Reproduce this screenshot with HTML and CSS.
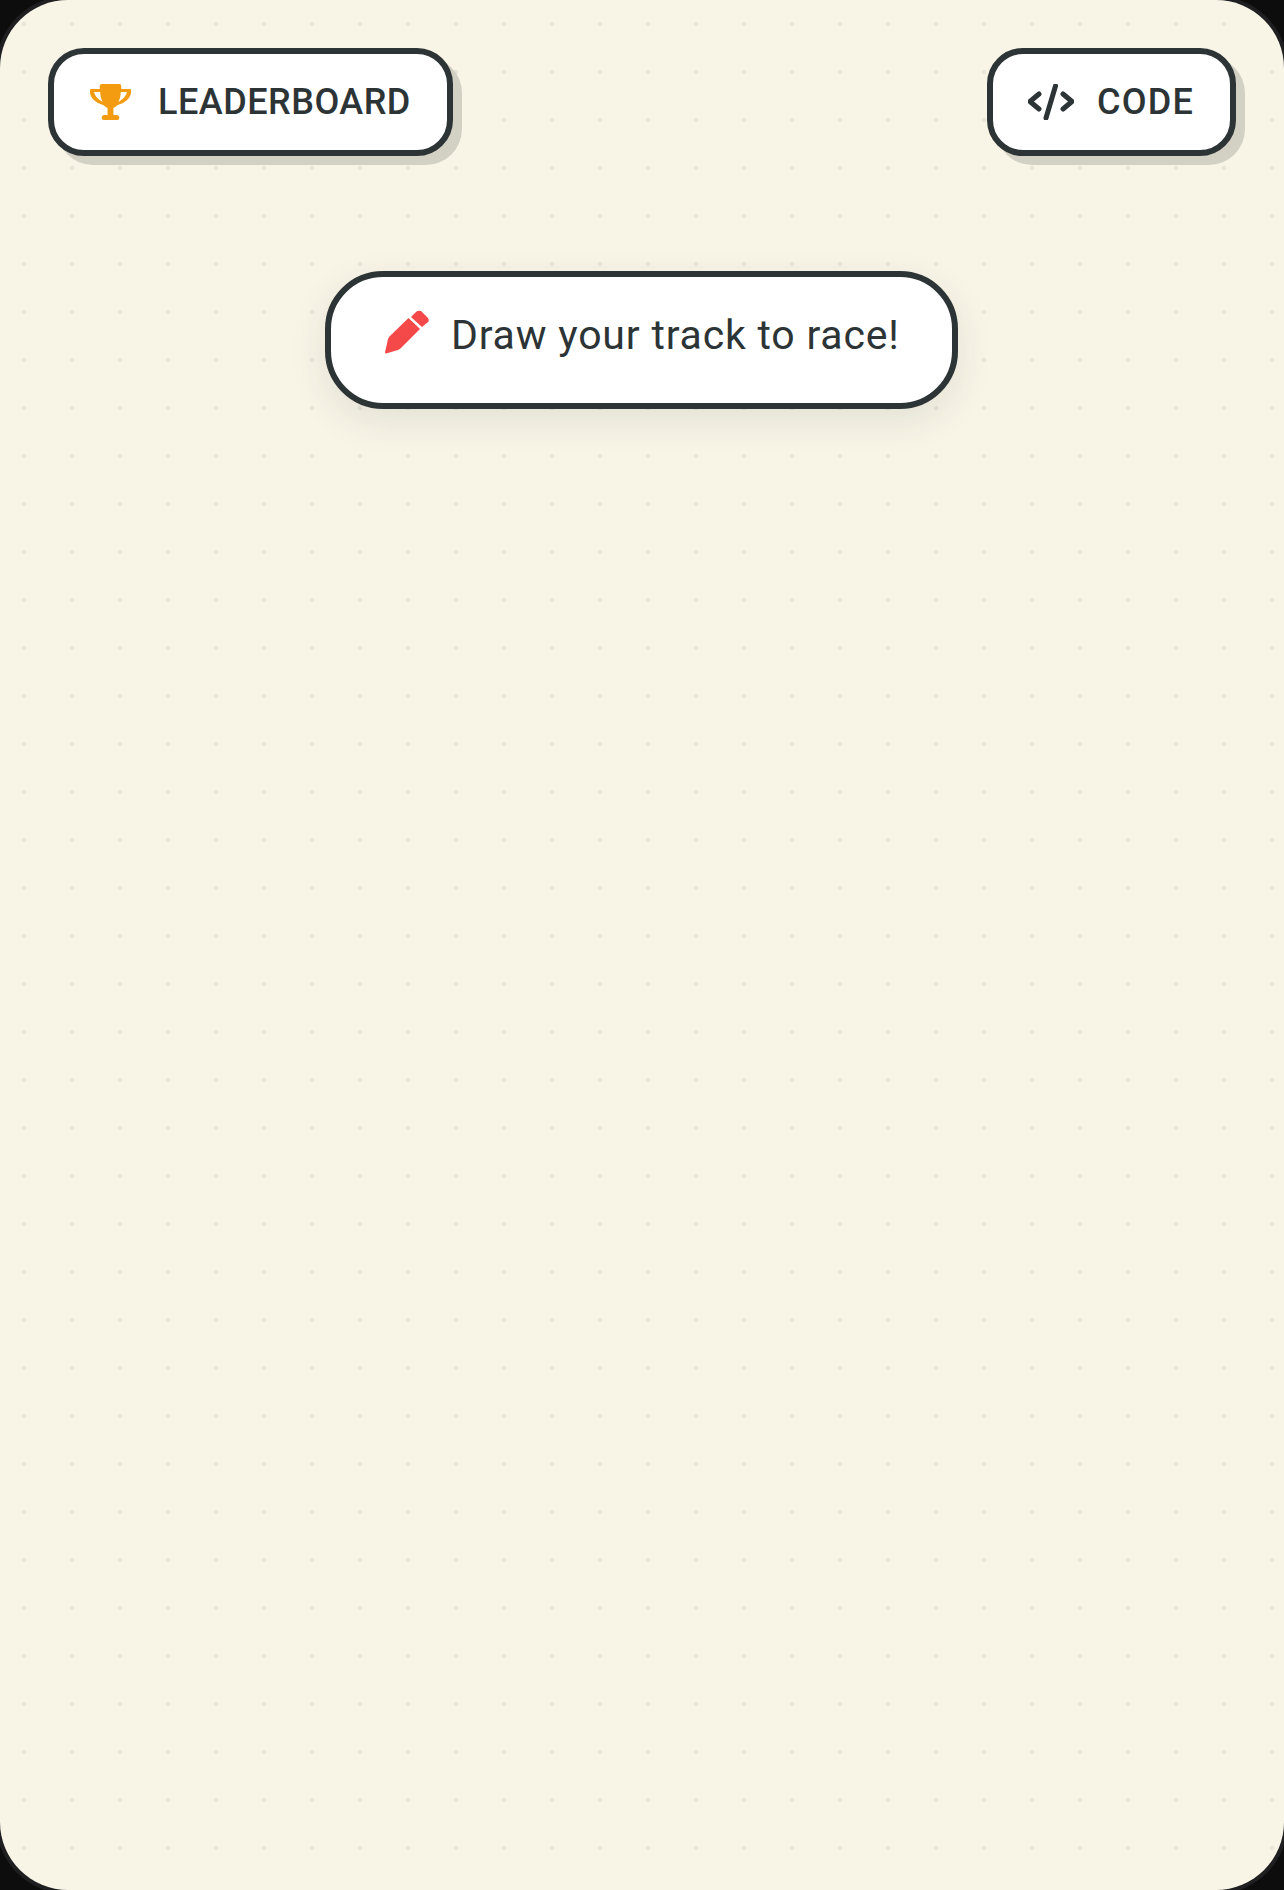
FILE: index.html
```html
<!DOCTYPE html>
<html lang="en">
<head>
    <meta charset="UTF-8">
    <meta name="viewport" content="width=device-width, initial-scale=1.0">
    <title>Draw your track</title>
    <link rel="stylesheet" href="styles.css">
</head>
<body>
    <div class="screen">
        <div class="top-bar">
            <button class="pill-button">
                <svg class="icon-trophy" width="41" height="36" viewBox="0 0 42 36" preserveAspectRatio="none">
                    <path fill-rule="evenodd" d="M12 0H30Q32 0 32 2V5H41Q42 5 42 6V8C42 14 36 19 28.5 21Q26 23 24 24V31H27Q30 31 30 33.5V34Q30 36 28 36H14Q12 36 12 34V33.5Q12 31 15 31H18V24Q16 23 13.500 21C6 19 0 14 0 8V6Q0 5 1 5H10V2Q10 0 12 0ZM4 8C5 12 8 15 13 18C11 14 10.500 11 10.500 8ZM38 8C37 12 34 15 29 18C31 14 31.500 11 31.500 8Z"/>
                </svg>
                <span class="leaderboard-label">LEADERBOARD</span>
            </button>
            <button class="pill-button">
                <svg class="icon-code" width="46" height="36" viewBox="0 0 46 36">
                    <path d="M11 10L2 17.500L11 25M35 10L44 17.500L35 25M27.500 2L18 34"/>
                </svg>
                <span class="code-label">CODE</span>
            </button>
        </div>
        <div class="hint">
            <svg class="icon-pencil" width="45" height="44" viewBox="0 0 45 44">
                <path d="M23.500 8L35 19L16 38Q15 39 13 40L1 43.500Q0 43.500 0 42.500L3 29Q4 27 5 26Z"/>
                <path d="M26 7L31 2Q33 0 36 1L42 7Q45 10 43 12L37 17Z"/>
            </svg>
            <span class="hint-text">Draw your track to race!</span>
        </div>
    </div>
</body>
</html>
```
FILE: styles.css
```css
html, body {
    margin: 0;
    height: 100%;
    background: #0d0d0d;
}
.screen {
    box-sizing: border-box;
    height: 1890px;
    padding: 48px;
    border-radius: 68px;
    box-shadow: 0 0 0 4px #1f1f21;
    background-color: #f8f5e7;
    background-image: radial-gradient(circle at center, #e9e7da 2.4px, transparent 2.6px);
    background-size: 48px 48px;
    font-family: Roboto, "Liberation Sans", sans-serif;
    color: #2d3436;
}
.top-bar {
    display: flex;
    justify-content: space-between;
}
.pill-button {
    display: flex;
    align-items: center;
    box-sizing: border-box;
    height: 108px;
    padding: 0 36px;
    border: 6px solid #2d3436;
    border-radius: 36px;
    background: #fff;
    box-shadow: 9px 9px 0 #d3d0c4;
    color: inherit;
    font-family: inherit;
    font-size: 36px;
    font-weight: 500;
    cursor: pointer;
}
.leaderboard-label {
    letter-spacing: 0.5px;
}
.code-label {
    letter-spacing: 1.2px;
}
.icon-trophy {
    margin-right: 27px;
    fill: #f39c12;
}
.icon-code {
    margin: 0 23px 0 -1px;
    fill: none;
    stroke: #2d3436;
    stroke-width: 5;
    stroke-linecap: round;
    stroke-linejoin: round;
}
.hint {
    display: flex;
    align-items: center;
    box-sizing: border-box;
    width: 633px;
    height: 138px;
    margin: 115px 0 0 277px;
    padding: 0 48px 10px 54px;
    border: 6px solid #2d3436;
    border-radius: 58px;
    background: #fff;
    box-shadow: 0 12px 36px rgba(45, 52, 54, 0.1);
}
.icon-pencil {
    margin: 0 21px 7px 0;
    fill: #f54848;
}
.hint-text {
    font-size: 41px;
    letter-spacing: 0.8px;
}
```
